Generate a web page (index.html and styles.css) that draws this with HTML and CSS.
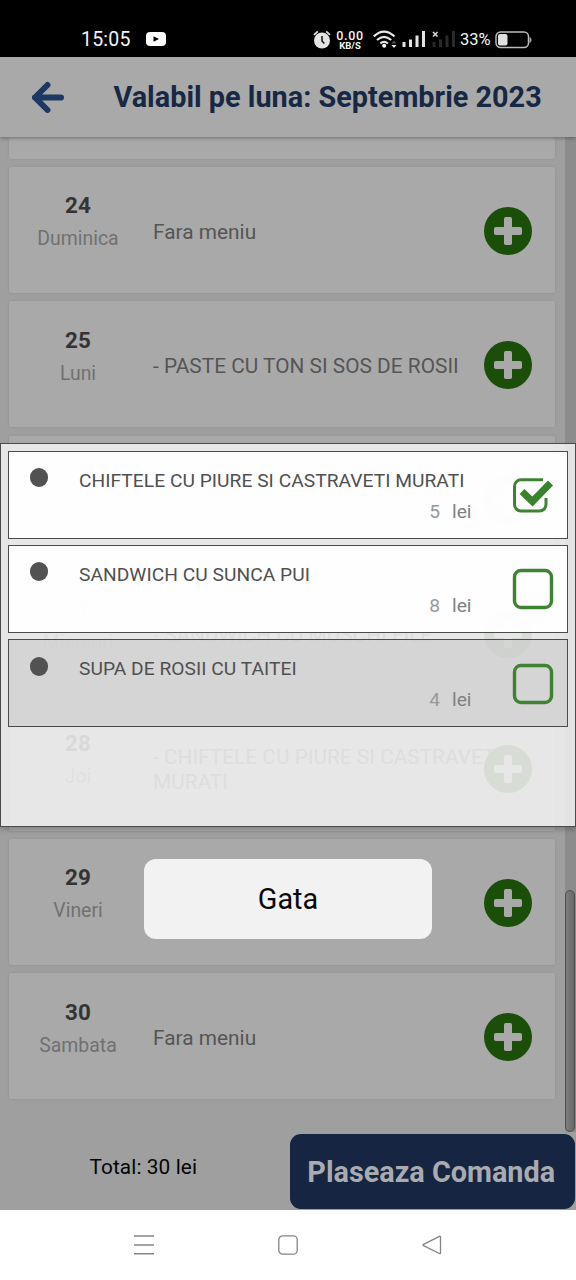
FILE: index.html
```html
<!DOCTYPE html>
<html lang="ro">
<head>
<meta charset="utf-8">
<title>Valabil pe luna: Septembrie 2023</title>
<link rel="stylesheet" href="styles.css">
</head>
<body>
<svg class="defs" aria-hidden="true">
  <symbol id="plus" viewBox="0 0 48 48">
    <circle cx="24" cy="24" r="24" fill="#1b4e09"/>
    <rect x="20" y="10" width="8" height="28" rx="1.8" fill="#a9a9a9"/>
    <rect x="10" y="20" width="28" height="8" rx="1.8" fill="#a9a9a9"/>
  </symbol>
</svg>
<div class="phone">
  <div class="status">
    <span class="clock">15:05</span>
    <svg class="video" width="20" height="15" viewBox="0 0 20 15"><rect width="20" height="14" rx="4" fill="#fff"/><path d="M7.500 4.200 13 7 7.500 9.800Z" fill="#000"/></svg>
    <svg class="alarm" width="18" height="19" viewBox="0 0 18 19"><circle cx="9" cy="10.500" r="8" fill="#e4e4e4"/><path d="M1 4.800 4.800 1.300M17 4.800 13.200 1.300" stroke="#e4e4e4" stroke-width="1.700"/><path d="M9 6v5l2.400 2.500" fill="none" stroke="#111" stroke-width="1.500"/></svg>
    <span class="speed"><b>0.00</b><small>KB/S</small></span>
    <svg class="wifi" width="24" height="19" viewBox="0 0 24 19"><g fill="none" stroke="#e8e8e8" stroke-width="2.200"><path d="M.8 6.400Q11 -3.200 21.500 6.400"/><path d="M4 10Q11 3.600 18.200 10"/><path d="M7.300 13.500Q11 10.200 14.900 13.500"/></g><circle cx="11.200" cy="15.800" r="2" fill="#fff"/><path d="M18.500 13.500h5L21 10.500Z" fill="#555"/><path d="M18.500 15h5L21 18Z" fill="#eee"/></svg>
    <svg class="signal" width="24" height="18" viewBox="0 0 24 18" fill="#e4e4e4"><path d="M.5 11h3v5h-3zM7 8.500h3V16H7zM13.500 4.500h3V16h-3zM20 0h3v16h-3z"/></svg>
    <svg class="nosim" width="24" height="18" viewBox="0 0 24 18"><path d="M.5 11h3v5h-3zM7 8.500h3V16H7zM13.500 4.500h3V16h-3zM20 0h3v16h-3z" fill="#292929"/><path d="M1 1 5.500 5.500M5.500 1 1 5.500" stroke="#ddd" stroke-width="1.500"/></svg>
    <span class="percent">33%</span>
    <svg class="battery" width="37" height="18" viewBox="0 0 37 18"><rect x="1" y="1" width="32.500" height="15.500" rx="4.500" fill="none" stroke="#bbb" stroke-width="1.500"/><rect x="3" y="3" width="9.500" height="11.500" rx="2" fill="#e0e0e0"/><path d="M34.500 6q2 .5 2 3t-2 3z" fill="#aaa"/></svg>
  </div>

  <header class="header">
    <svg width="33" height="32" viewBox="0 0 33 32"><path d="M15.500 4 3 16.500l12.500 12.500M3 16.500h26" fill="none" stroke="#1c3863" stroke-width="6" stroke-linecap="round" stroke-linejoin="round"/></svg>
    <h1>Valabil pe luna: Septembrie 2023</h1>
  </header>

  <main class="content">
    <div class="days">
      <section class="day day-cut"></section>
      <section class="day"><div class="date"><b>24</b><span>Duminica</span></div><p>Fara meniu</p><svg class="add"><use href="#plus"/></svg></section>
      <section class="day"><div class="date"><b>25</b><span>Luni</span></div><p class="dish">- PASTE CU TON SI SOS DE ROSII</p><svg class="add"><use href="#plus"/></svg></section>
      <section class="day"><div class="date"></div><p></p><svg class="add"><use href="#plus"/></svg></section>
      <section class="day"><div class="date"><b>27</b><span>Miercuri</span></div><p class="dish">- SANDWICH CU MUSCHI FILE</p><svg class="add"><use href="#plus"/></svg></section>
      <section class="day"><div class="date"><b>28</b><span>Joi</span></div><p class="dish">- CHIFTELE CU PIURE SI CASTRAVETI<br>MURATI</p><svg class="add"><use href="#plus"/></svg></section>
      <section class="day"><div class="date"><b>29</b><span>Vineri</span></div><p></p><svg class="add"><use href="#plus"/></svg></section>
      <section class="day"><div class="date"><b>30</b><span>Sambata</span></div><p>Fara meniu</p><svg class="add"><use href="#plus"/></svg></section>
    </div>
    <div class="track"><div class="thumb"></div></div>
  </main>

  <footer class="footer">
    <span class="total">Total: 30 lei</span>
    <button class="order">Plaseaza Comanda</button>
  </footer>

  <nav class="nav">
    <svg width="20" height="20" viewBox="0 0 20 20"><path d="M0 1h20M0 10h20M0 18.700h20" stroke="#858585" stroke-width="1.500"/></svg>
    <svg width="20" height="20" viewBox="0 0 20 20"><rect x=".8" y=".8" width="18.400" height="18.400" rx="4" fill="none" stroke="#858585" stroke-width="1.300"/></svg>
    <svg width="20" height="20" viewBox="0 0 20 20"><path d="M18.500 2v16q0 1-1 .5L1.500 10.700q-1-.7 0-1.300L17.500 1.400q1-.4 1 .6Z" fill="none" stroke="#858585" stroke-width="1.300"/></svg>
  </nav>

  <div class="modal">
    <div class="options">
      <div class="option"><i></i><div class="info"><span class="name">CHIFTELE CU PIURE SI CASTRAVETI MURATI</span><span class="price"><span>5</span><span>lei</span></span></div>
        <svg width="42" height="42" viewBox="0 0 42 42"><path d="M31 5.800H9a6.500 6.500 0 0 0-6.500 6.500V30.500a6.500 6.500 0 0 0 6.500 6.500H27.500a6.500 6.500 0 0 0 6.500-6.500V24" fill="none" stroke="#3f8234" stroke-width="3"/><path d="M10 17.500 20.500 27.500 38.500 9" fill="none" stroke="#3a822d" stroke-width="7" stroke-linejoin="miter"/></svg></div>
      <div class="option"><i></i><div class="info"><span class="name">SANDWICH CU SUNCA PUI</span><span class="price"><span>8</span><span>lei</span></span></div>
        <svg width="42" height="42" viewBox="0 0 42 42"><rect x="2.500" y="2.500" width="37" height="37" rx="6.500" fill="none" stroke="#3f8234" stroke-width="3.400"/></svg></div>
      <div class="option option-dim"><i></i><div class="info"><span class="name">SUPA DE ROSII CU TAITEI</span><span class="price"><span>4</span><span>lei</span></span></div>
        <svg width="42" height="42" viewBox="0 0 42 42"><rect x="2.500" y="2.500" width="37" height="37" rx="6.500" fill="none" stroke="#3f8234" stroke-width="3.400"/></svg></div>
    </div>
    <button class="done">Gata</button>
  </div>
</div>
</body>
</html>
```
FILE: styles.css
```css
* { box-sizing: border-box; }
body { margin: 0; font-family: Roboto, sans-serif; }
button { border: 0; padding: 0; font-family: inherit; }
svg { display: block; flex: none; }
.defs { position: absolute; width: 0; height: 0; }

.phone {
  position: relative;
  display: flex;
  flex-direction: column;
  width: 576px;
  height: 1280px;
  overflow: hidden;
  background: #9f9f9f;
}

.status {
  display: flex;
  align-items: center;
  flex: none;
  height: 57px;
  padding: 22px 0 0 81px;
  background: #000;
  color: #f4f4f4;
  white-space: nowrap;
}
.clock { width: 65px; font-size: 19.500px; letter-spacing: .2px; }
.alarm { margin-left: 147px; }
.speed { display: flex; flex-direction: column; align-items: center; width: 30px; margin-left: 4px; }
.speed b { font-size: 12.500px; line-height: 11px; font-weight: 500; letter-spacing: .7px; }
.speed small { font-size: 9.500px; line-height: 9px; font-weight: 700; }
.wifi { margin-left: 8px; }
.signal { margin-left: 5px; }
.nosim { margin-left: 6px; }
.percent { width: 32px; margin-left: 4px; font-size: 16.500px; }
.battery { margin-left: 3px; }

.header {
  position: relative;
  display: flex;
  align-items: center;
  gap: 49px;
  flex: none;
  height: 80px;
  padding-left: 32px;
  background: #a9a9a9;
  box-shadow: 0 1px 4px rgba(0, 0, 0, .35);
}
.header > svg { margin-left: -.5px; }
.header h1 { margin: 0; font-size: 28.800px; font-weight: 700; color: #172844; letter-spacing: .02px; white-space: nowrap; }

.content { display: flex; flex: none; height: 995px; overflow: hidden; }
.days { display: flex; flex-direction: column; gap: 8.400px; width: 565px; padding-left: 9px; }
.day {
  display: flex;
  align-items: center;
  flex: none;
  width: 545.500px;
  height: 126px;
  border-radius: 2px;
  background: #a9a9a9;
  box-shadow: 0 0 3px rgba(0, 0, 0, .1);
}
.day-cut { height: 21.600px; }
.date {
  display: flex;
  flex-direction: column;
  align-items: center;
  width: 138px;
  height: 71px;
}
.date b { font-size: 22.400px; line-height: 22px; color: #343434; letter-spacing: .2px; }
.date span { margin-top: 12px; font-size: 19.400px; line-height: 22px; color: #717171; }
.day p {
  width: 337px;
  margin: 4px 0 0 6px;
  font-size: 20.800px;
  line-height: 24.500px;
  color: #555;
  letter-spacing: .03px;
  white-space: nowrap;
}
.add { position: relative; width: 48px; height: 48px; margin-left: -6px; margin-top: 2px; }

.track { display: flex; align-items: flex-end; width: 11px; background: #8c8c8c; }
.thumb {
  width: 9.500px;
  height: 242px;
  border: 1.500px solid #4d4d4d;
  border-radius: 5px;
  background: linear-gradient(90deg, #7e7e7e, #696969);
}

.footer { display: flex; flex: none; height: 78px; padding: 2px 1.500px 1px 0; }
.total { width: 290px; padding: 20px 0 0 89.500px; font-size: 20.800px; line-height: 26px; color: #050505; letter-spacing: .1px; }
.order {
  flex: 1;
  padding-right: 2px;
  border-radius: 11px;
  background: #152542;
  color: #a9abb0;
  font-size: 28.800px;
  font-weight: 700;
}

.nav {
  display: flex;
  align-items: center;
  justify-content: center;
  gap: 124px;
  flex: none;
  height: 70px;
  background: #fff;
}

/* Dialog laid over the dimmed list */
.modal {
  position: absolute;
  top: 443px;
  left: 0;
  display: flex;
  flex-direction: column;
  align-items: center;
  gap: 32px;
  width: 576px;
}
.options {
  display: flex;
  flex-direction: column;
  gap: 6.400px;
  width: 100%;
  height: 384px;
  padding: 6.600px 7px;
  border: 1.500px solid #4b4b4b;
  background: rgba(238, 238, 238, .89);
  box-shadow: 0 3px 5px rgba(0, 0, 0, .2);
}
.option {
  display: flex;
  align-items: center;
  height: 88px;
  padding: 1px 13.500px 0 20.500px;
  border: 1.500px solid #4b4b4b;
  background: rgba(255, 255, 255, .94);
}
.option-dim { background: rgba(202, 202, 202, .6); }
.option i { width: 19px; height: 19px; margin-bottom: 35px; border-radius: 50%; background: #525252; }
.info { display: flex; flex-direction: column; width: 393px; margin: 2px 40px 0 30.500px; }
.name { font-size: 19.200px; line-height: 24px; color: #505050; letter-spacing: .04px; white-space: nowrap; }
.price { display: flex; justify-content: flex-end; gap: 12px; margin-top: 7px; font-size: 19.200px; line-height: 24px; color: #808080; }
.price span:first-child { color: #999; }
.done {
  width: 288px;
  height: 80px;
  border-radius: 12px;
  background: #f2f2f2;
  color: #080808;
  font-size: 28.800px;
}
```
